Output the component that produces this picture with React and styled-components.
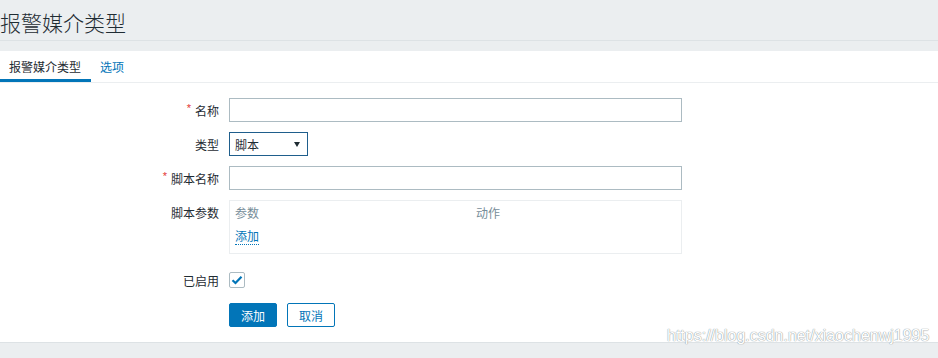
import React from "react";
import styled, { createGlobalStyle } from "styled-components";

const GlobalStyle = createGlobalStyle`
    html, body {
        margin: 0;
        padding: 0;
        background-color: #ebeef0;
        font-family: "Liberation Sans", "Noto Sans CJK SC", sans-serif;
        font-size: 12px;
        color: #1f2c33;
    }
`;

// #region Styles

const Page = styled.div`
    position: relative;
    min-height: 358px;
`;

const Header = styled.div`
    height: 40px;
    border-bottom: 1px solid #dde2e5;
    margin-bottom: 10px;
    display: flex;
    align-items: center;
    h1 {
        margin: 0;
        padding: 3px 0 0 0;
        font-family: "Noto Sans CJK SC", sans-serif;
        font-size: 21px;
        font-weight: 300;
        color: #1f2c33;
    }
`;

const Panel = styled.div`
    background-color: #ffffff;
    border-bottom: 1px solid #dde2e5;
    padding-bottom: 15px;
`;

const Tabs = styled.ul`
    display: flex;
    list-style: none;
    margin: 0;
    padding: 0;
    height: 31px;
    border-bottom: 1px solid #ebeef0;
`;

const Tab = styled.li`
    padding: 0 10px 0 9px;
    line-height: 31px;
    height: 31px;
    font-family: "Noto Sans CJK SC", sans-serif;
    font-size: 12px;
    color: ${(p) => (p.$active ? "#1f2c33" : "#0275b8")};
    box-shadow: ${(p) => (p.$active ? "inset 0 -3px 0 #0275b8" : "none")};
`;

const Form = styled.div`
    padding-top: 15px;
`;

const Row = styled.div`
    display: flex;
    align-items: ${(p) => (p.$top ? "flex-start" : "center")};
    gap: 10px;
    margin-top: ${(p) => p.$mt ?? 10}px;
    &:first-child {
        margin-top: 0;
    }
`;

const Label = styled.label`
    width: 219px;
    height: 24px;
    display: flex;
    align-items: center;
    justify-content: flex-end;
    font-family: "Noto Sans CJK SC", sans-serif;
    font-size: 12px;
    color: #1f2c33;
    .req {
        color: #e33734;
        font-family: "Liberation Sans", sans-serif;
        font-size: 11px;
        line-height: 1;
        margin: -3px 4px 0 0;
    }
`;

const TextInput = styled.input`
    box-sizing: border-box;
    width: 453px;
    height: 24px;
    border: 1px solid #acbbc2;
    background: #ffffff;
    margin: 0;
    padding: 0 5px;
    outline: none;
`;

const Select = styled.div`
    box-sizing: border-box;
    width: 79px;
    height: 24px;
    border: 1px solid #1f5e8c;
    display: flex;
    align-items: center;
    justify-content: space-between;
    padding: 0 7px 0 5px;
    font-family: "Noto Sans CJK SC", sans-serif;
    font-size: 12px;
    color: #1f2c33;
    .arrow {
        width: 0;
        height: 0;
        border-left: 3px solid transparent;
        border-right: 3px solid transparent;
        border-top: 5px solid #1f2c33;
    }
`;

const ParamBox = styled.div`
    box-sizing: border-box;
    width: 453px;
    height: 54px;
    border: 1px solid #ebeef0;
    padding: 3px 5px 0 5px;
    display: grid;
    grid-template-columns: 241px 1fr;
    grid-auto-rows: 18px;
    row-gap: 5px;
    font-family: "Noto Sans CJK SC", sans-serif;
    font-size: 12px;
    line-height: 18px;
`;

const HeadCell = styled.div`
    color: #768d99;
`;

const AddLink = styled.a`
    justify-self: start;
    align-self: start;
    color: #0275b8;
    text-decoration: none;
    border-bottom: 1px dotted #0275b8;
    line-height: 17px;
`;

const CheckBox = styled.span`
    box-sizing: border-box;
    width: 16px;
    height: 16px;
    border: 1px solid #acbbc2;
    border-radius: 2px;
    display: flex;
    align-items: center;
    justify-content: center;
`;

const Button = styled.button`
    box-sizing: border-box;
    width: 48px;
    height: 24px;
    border-radius: 2px;
    border: 1px solid #0275b8;
    background-color: ${(p) => (p.$primary ? "#0275b8" : "#ffffff")};
    color: ${(p) => (p.$primary ? "#ffffff" : "#0275b8")};
    font-family: "Noto Sans CJK SC", sans-serif;
    font-size: 12px;
    padding: 0;
`;

const Buttons = styled.div`
    display: flex;
    gap: 10px;
    margin-left: 229px;
    margin-top: 11px;
`;

const Watermark = styled.div`
    position: absolute;
    left: 667px;
    top: 327px;
    font-family: "Liberation Sans", sans-serif;
    font-size: 16px;
    color: #ffffff;
    text-shadow: 0 0 1px #8f989d, 0 0 1px #8f989d;
`;

// #endregion Styles

export default function App() {
    return (
        <>
            <GlobalStyle />
            <Page>
                <Header>
                    <h1>报警媒介类型</h1>
                </Header>
                <Panel>
                    <Tabs>
                        <Tab $active>报警媒介类型</Tab>
                        <Tab>选项</Tab>
                    </Tabs>
                    <Form>
                        <Row>
                            <Label><span className="req">*</span>名称</Label>
                            <TextInput type="text" />
                        </Row>
                        <Row>
                            <Label>类型</Label>
                            <Select>
                                <span>脚本</span>
                                <span className="arrow"></span>
                            </Select>
                        </Row>
                        <Row>
                            <Label><span className="req">*</span>脚本名称</Label>
                            <TextInput type="text" />
                        </Row>
                        <Row $top>
                            <Label>脚本参数</Label>
                            <ParamBox>
                                <HeadCell>参数</HeadCell>
                                <HeadCell>动作</HeadCell>
                                <AddLink>添加</AddLink>
                            </ParamBox>
                        </Row>
                        <Row $mt={14}>
                            <Label>已启用</Label>
                            <CheckBox>
                                <svg width="12" height="10" viewBox="0 0 12 10">
                                    <path d="M1.5 5.2 L4.5 8 L10.5 1.8" fill="none" stroke="#0275b8" strokeWidth="2.2" />
                                </svg>
                            </CheckBox>
                        </Row>
                        <Buttons>
                            <Button $primary>添加</Button>
                            <Button>取消</Button>
                        </Buttons>
                    </Form>
                </Panel>
                <Watermark>https://blog.csdn.net/xiaochenwj1995</Watermark>
            </Page>
        </>
    );
}
